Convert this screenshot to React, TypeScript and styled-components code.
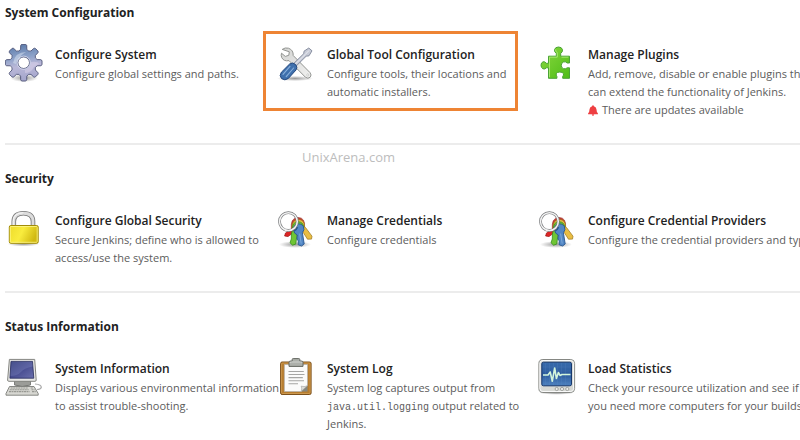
import React from "react";
import styled, { createGlobalStyle } from "styled-components";

const GlobalStyle = createGlobalStyle`
  * { box-sizing: border-box; }
  body {
    margin: 0;
    background: #ffffff;
    color: #222222;
    font-family: "Open Sans", "Noto Sans", sans-serif;
  }
`;

const Page = styled.main`
  padding: 4px 0 0 5px;
  overflow: hidden;
`;

const Section = styled.section`
  position: relative;
  & + & {
    margin-top: 24px;
    padding-top: 25px;
    border-top: 2px solid #ececec;
  }
`;

const SectionTitle = styled.h2`
  margin: 0 0 22px;
  font-size: 12px;
  line-height: 18px;
  font-weight: 700;
`;

const Grid = styled.div`
  display: grid;
  grid-template-columns: 272fr 261fr 262fr;
`;

const Item = styled.a<{ $highlighted?: boolean }>`
  display: flex;
  gap: 12px;
  min-width: 0;
  color: inherit;
  text-decoration: none;
  white-space: nowrap;
  ${(p) =>
    p.$highlighted &&
    `
    align-self: start;
    margin: -13px 20px -17px -14px;
    padding: 10px 0 7px 11px;
    border: 3px solid #ee8434;
  `}
`;

const IconBox = styled.svg`
  flex: none;
  width: 38px;
  height: 38px;
`;

const Copy = styled.div`
  min-width: 0;
`;

const ItemTitle = styled.h3`
  margin: 0;
  padding-top: 1px;
  font-size: 12px;
  line-height: 20px;
  font-weight: 600;
`;

const Line = styled.span`
  display: block;
  font-size: 11px;
  line-height: 18px;
  font-weight: 400;
  color: #5c5c5c;
`;

const Alert = styled(Line)`
  display: flex;
  align-items: center;
  gap: 4px;
`;

const Code = styled.code`
  font-family: "Liberation Mono", monospace;
  font-size: 10px;
  line-height: 1;
`;

const Watermark = styled.span`
  position: absolute;
  top: 2px;
  left: 297px;
  font-size: 13px;
  line-height: 20px;
  color: #bdbdbd;
`;

const gearPath = (() => {
  const c = 18.7;
  const at = (deg: number, r: number) => {
    const a = (deg * Math.PI) / 180;
    return `${(c + r * Math.sin(a)).toFixed(2)} ${(c - r * Math.cos(a)).toFixed(2)}`;
  };
  let d = "";
  for (let i = 0; i < 8; i++) {
    const a = i * 45;
    d += `${i ? "L" : "M"}${at(a - 13, 13.8)} L${at(a - 10, 17.4)} Q${at(a - 9, 18.3)} ${at(a - 5, 18.4)} L${at(a + 5, 18.4)} Q${at(a + 9, 18.3)} ${at(a + 10, 17.4)} L${at(a + 13, 13.8)} Q${at(a + 22.5, 11.6)} ${at(a + 32, 13.8)} `;
  }
  return `${d}Z M${c - 5.8} ${c} a5.8 5.8 0 1 0 11.6 0 a5.8 5.8 0 1 0 -11.6 0Z`;
})();

const Gear = () => (
  <IconBox viewBox="0 0 38 38" aria-hidden="true">
    <defs>
      <linearGradient id="gear" x1="0" y1="0" x2="0.15" y2="1">
        <stop offset="0" stopColor="#5676a6" />
        <stop offset="0.4" stopColor="#8ba1c8" />
        <stop offset="0.65" stopColor="#bab8d8" />
        <stop offset="1" stopColor="#a6a7cd" />
      </linearGradient>
      <radialGradient id="shade">
        <stop offset="0" stopColor="#000" stopOpacity="0.4" />
        <stop offset="1" stopColor="#000" stopOpacity="0" />
      </radialGradient>
    </defs>
    <ellipse cx="19" cy="34" rx="14" ry="4" fill="url(#shade)" />
    <path d={gearPath} fill="url(#gear)" fillRule="evenodd" stroke="#4d5276" strokeWidth="0.9" />
    <path d="M8 19 Q10 8 21 8 Q14 12 15 15 Q11 16 11 20Z" fill="#dbe5f4" opacity="0.5" />
    <path d="M26 18 Q33 17 34 20 L29 23 Q26 29 20 29 L20 26 Q26 24 26 18Z" fill="#dcd3ec" opacity="0.5" />
    <circle cx="18.7" cy="18.7" r="6.6" fill="none" stroke="#d9def0" strokeWidth="0.8" />
  </IconBox>
);

const Tools = () => (
  <IconBox viewBox="0 0 38 38" aria-hidden="true">
    <defs>
      <linearGradient id="steel" x1="0" y1="0" x2="1" y2="1">
        <stop offset="0" stopColor="#d3d4d2" />
        <stop offset="1" stopColor="#f1f1f0" />
      </linearGradient>
    </defs>
    <ellipse cx="18" cy="34.5" rx="18" ry="2.6" fill="url(#shade)" />
    <path
      d="M5.2 5.4 Q8 3.2 11.5 4.2 Q16.5 6 16.2 11.5 L33 28.6 Q35 31 33.2 33.2 Q31 35.3 28.4 33.2 L12 16.6 Q6.7 17.7 4.7 13.5 Q3.8 11.3 4.5 9.2 L8.3 12.4 L11.8 11.3 L12.3 7.8 Z"
      fill="url(#steel)"
      stroke="#929491"
      strokeWidth="1"
      strokeLinejoin="round"
    />
    <circle cx="30.8" cy="31" r="1.1" fill="#fff" stroke="#a7a9a6" strokeWidth="0.5" />
    <path d="M15.5 20.7 L26.7 9.7 L27 7.2 L31.8 4 L35 6.8 L32 11.8 L29.2 12.2 L18 23.2Z" fill="#c6cad6" stroke="#7e8698" strokeWidth="0.9" strokeLinejoin="round" />
    <path d="M16.7 21.6 L28.2 10.5 L32 6.5" stroke="#f1f3f8" strokeWidth="0.8" fill="none" />
    <path d="M12.6 20 Q15.8 17.7 18.6 20.5 Q21 23.2 19 26 L11.4 34.4 Q7.8 37.2 4.6 34.6 Q1.8 31.7 4.4 28.2 Z" fill="#3f70ad" stroke="#25497f" strokeWidth="1" />
    <path d="M13 22.4 L6 30.3 M16.6 24 L9.2 32.6" stroke="#89b0dc" strokeWidth="1.1" strokeLinecap="round" />
  </IconBox>
);

const Puzzle = () => (
  <IconBox viewBox="0 0 38 38" aria-hidden="true">
    <defs>
      <linearGradient id="leaf" x1="0" y1="0" x2="1" y2="1">
        <stop offset="0" stopColor="#8ad83f" />
        <stop offset="1" stopColor="#4fbd18" />
      </linearGradient>
    </defs>
    <path
      d="M10.5 12.2 H18.3 V9.4 Q16.2 8 16.5 5.7 Q17.2 3 20.5 3 Q23.8 3 24.5 5.7 Q24.8 8 22.7 9.4 V12.2 H31.5 V19 H29.2 Q27.5 17.2 25.4 18 Q23.3 19 23.3 21.4 Q23.3 24 25.6 24.7 Q27.7 25.3 29.2 23.8 H31.5 V34.3 H24.7 V32.4 Q26 31.2 25.4 29.6 Q24.6 28 21.8 28 Q19 28 18.3 29.7 Q17.8 31.2 18.9 32.4 V34.3 H10.5 V23.8 H8.3 Q7 25.6 4.9 24.8 Q3 23.8 3 21.2 Q3 18.6 5 17.8 Q7 17.2 8.3 19.3 H10.5Z"
      fill="url(#leaf)"
      stroke="#4aa336"
      strokeWidth="1"
      strokeLinejoin="round"
    />
    <path d="M11.5 33.2 V13.2 H19.3 V8.8 Q17 7 17.7 5.4 M23.5 13.2 H30.4" stroke="#b4ef7c" strokeWidth="0.8" fill="none" />
  </IconBox>
);

const Lock = () => (
  <IconBox viewBox="0 0 38 38" aria-hidden="true">
    <defs>
      <linearGradient id="gold" x1="0" y1="0" x2="1" y2="0.3">
        <stop offset="0" stopColor="#eedb2c" />
        <stop offset="0.5" stopColor="#f9ec3e" />
        <stop offset="1" stopColor="#d1b911" />
      </linearGradient>
    </defs>
    <ellipse cx="18.5" cy="34" rx="16" ry="2.5" fill="url(#shade)" />
    <path d="M8.8 16 V11.5 Q8.8 3.2 18.4 3.2 Q28 3.2 28 11.5 V16" fill="none" stroke="#777" strokeWidth="4.6" />
    <path d="M8.8 16 V11.5 Q8.8 3.2 18.4 3.2 Q28 3.2 28 11.5 V16" fill="none" stroke="#dcdcdc" strokeWidth="2.9" />
    <path d="M8.2 15 V11.5 Q8.4 3 18.4 2.7" fill="none" stroke="#fff" strokeWidth="0.8" />
    <rect x="4.3" y="15.5" width="28.9" height="17.8" rx="1.5" fill="url(#gold)" stroke="#a18b08" strokeWidth="1" />
    <rect x="5.3" y="16.5" width="26.9" height="15.8" rx="0.8" fill="none" stroke="#fff78d" strokeWidth="0.8" />
  </IconBox>
);

const Keys = () => (
  <IconBox viewBox="0 0 38 38" aria-hidden="true">
    <ellipse cx="18" cy="34.5" rx="16" ry="3.4" fill="url(#shade)" />
    <path d="M8.5 23 L13.5 19.5 L16.5 22.5 L11 26.6 L7.6 26Z" fill="#dc2525" stroke="#9b1212" strokeWidth="0.7" />
    <path d="M14.3 19 Q13.3 7.6 21 7.4 Q28.5 7.6 27.6 17.5 L22 24 L16 22Z" fill="#c43a30" stroke="#98302a" strokeWidth="0.6" />
    <path d="M15 19 Q14.6 9.6 21.3 9.4 Q27.8 9.6 27.6 17 L28.5 17.5 L35 26.2 L34.5 29.1 L30.5 29.2 L25.3 21 L20 23Z" fill="#e9bd43" stroke="#9b761b" strokeWidth="0.7" />
    <path d="M15.4 20 Q14.8 12 21 11.7 Q26.8 12 26.8 18 L20 24 L18.8 34 L15.6 35.2 L13 32.7 L14.3 29 L14.4 24Z" fill="#6fc534" stroke="#338b1d" strokeWidth="0.8" />
    <path d="M16.4 19.5 Q16.1 15.5 19.5 14.2 Q24.4 13 26.4 16.5 Q28 19.9 25.4 22.7 L27.2 34 L24.6 36 L21.2 34.8 L21.3 31 L20 29 L20.4 25 Q17 24 16.4 19.5Z" fill="#5287c5" stroke="#28568e" strokeWidth="0.9" />
    <path d="M22.6 23.6 L24.2 33.5" stroke="#86b0dd" strokeWidth="0.8" />
    <path d="M17 20.2 Q19 19.4 20 17" stroke="#28568e" strokeWidth="2.6" fill="none" />
    <circle cx="11.4" cy="11.6" r="8.9" fill="none" stroke="#77797b" strokeWidth="2.8" />
    <circle cx="11.4" cy="11.6" r="8.9" fill="none" stroke="#f2f2f2" strokeWidth="1.5" />
  </IconBox>
);

const Computer = () => (
  <IconBox viewBox="0 0 38 38" aria-hidden="true">
    <defs>
      <linearGradient id="screen" x1="0" y1="0" x2="1" y2="1">
        <stop offset="0" stopColor="#27306f" />
        <stop offset="0.5" stopColor="#484d91" />
        <stop offset="1" stopColor="#6b70ad" />
      </linearGradient>
    </defs>
    <path d="M30 26 Q36.5 26.5 36.3 29.5 Q35.5 31.5 32 31.5" fill="none" stroke="#aaa" strokeWidth="1.2" />
    <path d="M9.5 23 H25.5 V27 Q17 30 9.5 27Z" fill="#9b9c98" stroke="#6b6c68" strokeWidth="0.8" />
    <path d="M4.4 1.4 H29.7 L31.2 22 Q31.2 23.3 30 23.3 H3.8 Q2.6 23.3 2.6 22Z" fill="#e7e7e4" stroke="#858681" strokeWidth="1" />
    <path d="M6 3.4 H27.5 L28.8 20.2 H4.9Z" fill="url(#screen)" stroke="#262b5d" strokeWidth="0.8" />
    <path d="M6.4 3.8 H27 L27.6 8.5 Q19 10 16 14 Q12.5 18 5.6 18Z" fill="#8b94c9" opacity="0.3" />
    <path d="M4.5 28.5 H29 L33.2 35.5 V37.2 H1 V35.5Z" fill="#d7d7d2" stroke="#7c7d78" strokeWidth="0.9" />
    <path d="M5.7 30 H23 M4.8 31.8 H23.7 M4 33.6 H24.5 M25.8 30 H28.3 M26.5 31.8 H29.6 M27 33.6 H30.7" stroke="#989993" strokeWidth="1.1" strokeDasharray="2 0.5" />
  </IconBox>
);

const Clipboard = () => (
  <IconBox viewBox="0 0 38 38" aria-hidden="true">
    <rect x="3.6" y="4" width="30.5" height="32.5" rx="1.5" fill="#b77d2f" stroke="#7b501c" strokeWidth="1" />
    <rect x="4.6" y="5" width="28.5" height="30.5" rx="1" fill="none" stroke="#d6a35a" strokeWidth="0.7" />
    <path d="M7.4 6.5 H30.5 V27.8 L24.5 33.5 H7.4Z" fill="#fbfbfa" stroke="#b5b2ad" strokeWidth="0.7" />
    <path d="M24 33.5 Q25.5 30 24 28 Q27.5 29.4 30.5 27.5 V33.5Z" fill="#858780" />
    <path d="M24 33.5 Q25.5 30 24 28 Q27.5 29.4 30.5 27.5Z" fill="#deded9" stroke="#aaa" strokeWidth="0.4" />
    <path d="M11.5 13.5 H26.8 M11.5 16.5 H27.5 M11.5 19.6 H25.8 M11.5 22.7 H27 M11.5 25.8 H21" stroke="#a6a6a4" strokeWidth="1.1" />
    <path d="M12 8.4 V4.3 Q12 3.1 13.5 3 H15.2 V1.5 Q15.2 0.6 16.2 0.6 H21.8 Q22.8 0.6 22.8 1.5 V3 H24.3 Q26 3.1 26 4.3 V8.4Z" fill="#adb0aa" stroke="#656862" strokeWidth="1" />
    <path d="M13 5.2 Q13 4 14.4 4 H24 Q25 4 25 5.2" stroke="#dedfdc" strokeWidth="0.7" fill="none" />
  </IconBox>
);

const Monitor = () => (
  <IconBox viewBox="0 0 38 38" aria-hidden="true">
    <defs>
      <linearGradient id="blue" x1="0" y1="0" x2="0" y2="1">
        <stop offset="0" stopColor="#386bac" />
        <stop offset="0.5" stopColor="#2d5c9d" />
        <stop offset="1" stopColor="#4b80be" />
      </linearGradient>
    </defs>
    <ellipse cx="18.5" cy="35" rx="17" ry="1.8" fill="url(#shade)" />
    <rect x="0.9" y="1.5" width="35.7" height="33" rx="4" fill="#d7d9d5" stroke="#858783" strokeWidth="1" />
    <rect x="1.9" y="2.5" width="33.7" height="31" rx="3" fill="none" stroke="#fafafa" strokeWidth="1" />
    <rect x="3.8" y="4.2" width="29.7" height="23.6" rx="1.6" fill="url(#blue)" stroke="#17386d" strokeWidth="1" />
    <path d="M7.5 5 V27 M11.5 5 V27 M15.5 5 V27 M19.5 5 V27 M23.5 5 V27 M27.5 5 V27 M4.5 9 H33 M4.5 13 H33 M4.5 17 H33 M4.5 21 H33 M4.5 25 H33" stroke="#6d9bd0" strokeWidth="0.5" opacity="0.3" />
    <path d="M5 17 H10 L12.2 14 L14.3 23.2 L16.7 10 L18.4 20.5 L20.4 14.5 L22 17.4 L24 16.5 H32.5" stroke="#d3f6dc" strokeWidth="1.6" fill="none" strokeLinejoin="round" />
    <g fill="#ededeb" stroke="#929490" strokeWidth="0.8">
      <circle cx="18.7" cy="31" r="1.6" />
      <circle cx="24" cy="31" r="1.6" />
      <circle cx="29.3" cy="31" r="1.6" />
    </g>
  </IconBox>
);

const BellSvg = styled.svg`
  width: 10px;
  height: 11px;
`;

const Bell = () => (
  <BellSvg viewBox="0 0 10 11" aria-hidden="true">
    <path d="M5 0.3 Q5.8 0.3 5.9 1.2 Q8.5 2 8.5 4.5 Q8.5 7 9.9 8.2 V9.2 H0.1 V8.2 Q1.5 7 1.5 4.5 Q1.5 2 4.1 1.2 Q4.2 0.3 5 0.3Z M3.8 9.5 H6.2 Q6 10.7 5 10.7 Q4 10.7 3.8 9.5Z" fill="#ee3f42" />
  </BellSvg>
);

type EntryProps = {
  icon: React.ReactNode;
  title: string;
  highlighted?: boolean;
  children: React.ReactNode;
};

const Entry = ({ icon, title, highlighted, children }: EntryProps) => (
  <Item href="#" $highlighted={highlighted}>
    {icon}
    <Copy>
      <ItemTitle>{title}</ItemTitle>
      {children}
    </Copy>
  </Item>
);

export default function App() {
  return (
    <>
      <GlobalStyle />
      <Page>
        <Section>
          <SectionTitle>System Configuration</SectionTitle>
          <Grid>
            <Entry icon={<Gear />} title="Configure System">
              <Line>Configure global settings and paths.</Line>
            </Entry>
            <Entry icon={<Tools />} title="Global Tool Configuration" highlighted>
              <Line>Configure tools, their locations and</Line>
              <Line>automatic installers.</Line>
            </Entry>
            <Entry icon={<Puzzle />} title="Manage Plugins">
              <Line>Add, remove, disable or enable plugins th</Line>
              <Line>can extend the functionality of Jenkins.</Line>
              <Alert>
                <Bell />
                There are updates available
              </Alert>
            </Entry>
          </Grid>
        </Section>
        <Section>
          <Watermark>UnixArena.com</Watermark>
          <SectionTitle>Security</SectionTitle>
          <Grid>
            <Entry icon={<Lock />} title="Configure Global Security">
              <Line>Secure Jenkins; define who is allowed to</Line>
              <Line>access/use the system.</Line>
            </Entry>
            <Entry icon={<Keys />} title="Manage Credentials">
              <Line>Configure credentials</Line>
            </Entry>
            <Entry icon={<Keys />} title="Configure Credential Providers">
              <Line>Configure the credential providers and typ</Line>
            </Entry>
          </Grid>
        </Section>
        <Section>
          <SectionTitle>Status Information</SectionTitle>
          <Grid>
            <Entry icon={<Computer />} title="System Information">
              <Line>Displays various environmental information</Line>
              <Line>to assist trouble-shooting.</Line>
            </Entry>
            <Entry icon={<Clipboard />} title="System Log">
              <Line>System log captures output from</Line>
              <Line>
                <Code>java.util.logging</Code> output related to
              </Line>
              <Line>Jenkins.</Line>
            </Entry>
            <Entry icon={<Monitor />} title="Load Statistics">
              <Line>Check your resource utilization and see if</Line>
              <Line>you need more computers for your builds.</Line>
            </Entry>
          </Grid>
        </Section>
      </Page>
    </>
  );
}
